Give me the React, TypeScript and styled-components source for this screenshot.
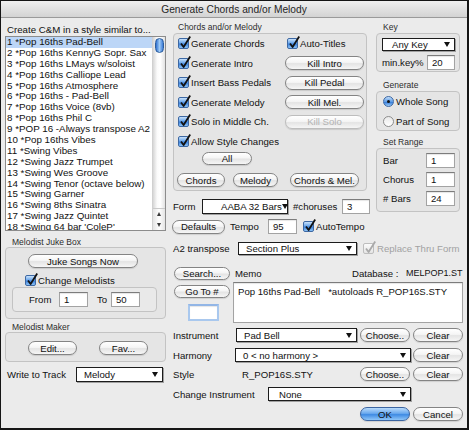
import React from "react";
import styled, { createGlobalStyle } from "styled-components";

const FONT = `"Liberation Sans", Arial, Helvetica, sans-serif`;

const GlobalStyle = createGlobalStyle`
  * { box-sizing: border-box; }
  html, body { margin: 0; padding: 0; background: #ffffff; }
  body { font-family: ${FONT}; color: #111; }
`;

const Window = styled.div`
  width: 469px;
  height: 430px;
  border: 1px solid #151515;
  border-right-width: 2px;
  border-bottom-width: 2px;
  background: #ebebeb;
  display: flex;
  flex-direction: column;
  overflow: hidden;
  font-family: ${FONT};
  font-size: 9.6px;
  color: #111;
`;

const TitleBar = styled.div`
  flex: none;
  height: 17px;
  background: linear-gradient(#f0f0f0, #d3d3d3);
  border-bottom: 1px solid #9a9a9a;
  display: flex;
  align-items: center;
  justify-content: center;
  font-size: 10.2px;
  color: #262626;
`;

const Body = styled.div`
  display: flex;
  align-items: flex-start;
  padding-left: 4px;
  gap: 7px;
`;

const LeftCol = styled.div`
  width: 161px;
  flex: none;
  display: flex;
  flex-direction: column;
`;

const Caption = styled.div`
  margin-top: 5px;
  height: 13px;
  line-height: 13px;
  padding-left: 2px;
  font-size: 9.7px;
  white-space: nowrap;
`;

const ListBox = styled.div`
  height: 195px;
  border: 1px solid #8c8c8c;
  background: #fff;
  display: flex;
`;

const ListItems = styled.div`
  flex: 1;
  overflow: hidden;
`;

const ListRow = styled.div<{ $selected?: boolean }>`
  height: 10.9px;
  line-height: 10.9px;
  font-size: 9.8px;
  padding-left: 1px;
  white-space: nowrap;
  background: ${(p) => (p.$selected ? "#bcd6f7" : "transparent")};
`;

const ScrollBar = styled.div`
  width: 13px;
  flex: none;
  display: flex;
  flex-direction: column;
  justify-content: space-between;
  align-items: center;
  background: linear-gradient(90deg, #d6d6d6, #fbfbfb 35%, #ffffff 60%, #e2e2e2);
  border-left: 1px solid #d0d0d0;
`;

const Thumb = styled.div`
  margin-top: 1px;
  width: 9px;
  height: 15px;
  border-radius: 5px;
  border: 1px solid #2d5e9e;
  background: linear-gradient(90deg, #2e6fcf, #9fcbf6 50%, #3a7ad6);
`;

const ScrollArrows = styled.div`
  width: 100%;
  height: 22px;
  display: flex;
  flex-direction: column;
  align-items: center;
  justify-content: space-around;
  border-top: 1px solid #c9c9c9;
  background: linear-gradient(90deg, #e4e4e4, #ffffff 50%, #e4e4e4);
`;

const ArrowUp = styled.span`
  width: 0;
  height: 0;
  border-left: 2.5px solid transparent;
  border-right: 2.5px solid transparent;
  border-bottom: 4px solid #3a3a3a;
`;

const ArrowDown = styled.span`
  width: 0;
  height: 0;
  border-left: 2.5px solid transparent;
  border-right: 2.5px solid transparent;
  border-top: 4px solid #3a3a3a;
`;

const GroupLabel = styled.div<{ $h: number; $pl: number; $mt?: number }>`
  margin-top: ${(p) => p.$mt ?? 4}px;
  height: ${(p) => p.$h}px;
  line-height: ${(p) => p.$h}px;
  padding-left: ${(p) => p.$pl}px;
  font-size: 8.5px;
  color: #2b2b2b;
  white-space: nowrap;
`;

const GroupBox = styled.div`
  border: 1px solid #c3c3c3;
  border-radius: 4px;
  background: #e5e5e5;
`;

const JukeBox = styled(GroupBox)`
  height: 72px;
  padding: 6px 5px;
  display: flex;
  flex-direction: column;
`;

const RangeBox = styled(GroupBox)`
  margin: 0 0 0 1px;
  width: 145px;
  height: 25px;
  padding-left: 16px;
  display: flex;
  align-items: center;
  background: #e9e9e9;
`;

const MakerBox = styled(GroupBox)`
  height: 30px;
  display: flex;
  align-items: center;
  padding: 2px 0 0 22px;
  gap: 22px;
`;

const WriteRow = styled.div`
  margin-top: 4px;
  height: 16px;
  display: flex;
  align-items: center;
  justify-content: space-between;
  padding: 0 3px 0 2px;
`;

const Label = styled.span<{ $w?: number; $ml?: number; $color?: string; $size?: number }>`
  flex: none;
  width: ${(p) => (p.$w ? `${p.$w}px` : "auto")};
  margin-left: ${(p) => p.$ml ?? 0}px;
  color: ${(p) => p.$color ?? "#111"};
  white-space: nowrap;
  font-size: ${(p) => p.$size ?? 9.6}px;
`;

const Btn = styled.div<{ $w: number; $h?: number; $ml?: number; $disabled?: boolean; $primary?: boolean }>`
  flex: none;
  width: ${(p) => p.$w}px;
  height: ${(p) => p.$h ?? 14}px;
  margin-left: ${(p) => p.$ml ?? 0}px;
  border-radius: 8px;
  border: 1px solid ${(p) => (p.$primary ? "#3b64a0" : p.$disabled ? "#bdbdbd" : "#848484")};
  background: ${(p) =>
    p.$primary
      ? "linear-gradient(#b9dbfb 0%, #6aa9ee 45%, #3f8be4 55%, #8fc6f8 100%)"
      : "linear-gradient(#ffffff 0%, #f5f5f5 45%, #e4e4e4 55%, #f6f6f6 100%)"};
  box-shadow: 0 1px 1px rgba(0, 0, 0, 0.12);
  display: flex;
  align-items: center;
  justify-content: center;
  font-size: 9.6px;
  color: ${(p) => (p.$disabled ? "#b3b3b3" : "#111")};
  white-space: nowrap;
`;

const CheckRow = styled.div<{ $ml?: number; $mt?: number }>`
  display: flex;
  align-items: center;
  gap: 2px;
  height: 14px;
  margin-left: ${(p) => p.$ml ?? 0}px;
  margin-top: ${(p) => p.$mt ?? 0}px;
  white-space: nowrap;
  font-size: 9.6px;
`;

const CheckBoxBox = styled.span<{ $disabled?: boolean }>`
  position: relative;
  flex: none;
  display: inline-block;
  width: 11px;
  height: 11px;
  border-radius: 2px;
  border: 1px solid ${(p) => (p.$disabled ? "#bdbdbd" : "#3d68a3")};
  background: ${(p) =>
    p.$disabled
      ? "linear-gradient(#fbfbfb, #e4e4e4)"
      : "linear-gradient(#c9e2fc 0%, #6aa6ea 45%, #3a80dc 55%, #8cc3f6 100%)"};
`;

const CheckMark = styled.svg`
  position: absolute;
  left: -1px;
  top: -4px;
  width: 14px;
  height: 14px;
  overflow: visible;
`;

const Check: React.FC<{ disabled?: boolean }> = ({ disabled }) => (
  <CheckBoxBox $disabled={disabled}>
    <CheckMark viewBox="0 0 14 14">
      <path
        d="M3 8.5 L5.6 12 L12.2 1.5"
        fill="none"
        stroke={disabled ? "#a9a9a9" : "#121212"}
        strokeWidth="1.8"
        strokeLinejoin="round"
      />
    </CheckMark>
  </CheckBoxBox>
);

const RadioDot = styled.span<{ $on?: boolean }>`
  position: relative;
  flex: none;
  width: 11px;
  height: 11px;
  border-radius: 50%;
  border: 1px solid ${(p) => (p.$on ? "#3d68a3" : "#8d8d8d")};
  background: ${(p) =>
    p.$on
      ? "linear-gradient(#c4defa 0%, #5f9de6 50%, #3a80dc 60%, #9ccbf7 100%)"
      : "linear-gradient(#e9e9e9, #ffffff)"};
  &::after {
    content: "";
    display: ${(p) => (p.$on ? "block" : "none")};
    position: absolute;
    left: 3px;
    top: 3px;
    width: 3px;
    height: 3px;
    border-radius: 50%;
    background: #111;
  }
`;

const Popup = styled.div<{ $w: number; $h?: number; $ml?: number; $pl?: number }>`
  flex: none;
  width: ${(p) => p.$w}px;
  height: ${(p) => p.$h ?? 14}px;
  margin-left: ${(p) => p.$ml ?? 0}px;
  background: #fff;
  border: 1px solid #1c1c1c;
  box-shadow: 1px 1px 0 #a0a0a0;
  display: flex;
  align-items: center;
  justify-content: space-between;
  padding: 0 4px 0 ${(p) => p.$pl ?? 7}px;
  font-size: 9.6px;
  white-space: nowrap;
`;

const Arrow = styled.span`
  flex: none;
  width: 0;
  height: 0;
  border-left: 3.5px solid transparent;
  border-right: 3.5px solid transparent;
  border-top: 5px solid #111;
`;

const Field = styled.div<{ $w: number; $h?: number; $ml?: number; $focus?: boolean }>`
  flex: none;
  width: ${(p) => p.$w}px;
  height: ${(p) => p.$h ?? 15}px;
  margin-left: ${(p) => p.$ml ?? 0}px;
  background: #fff;
  border: ${(p) => (p.$focus ? "2px solid #a9c8ee" : "1px solid #a3a3a3")};
  border-top-color: ${(p) => (p.$focus ? "#93b6e6" : "#7c7c7c")};
  box-shadow: inset 0 1px 1px rgba(0, 0, 0, 0.1);
  display: flex;
  align-items: center;
  padding-left: 4px;
  font-size: 9.6px;
`;

const RightArea = styled.div`
  width: 290px;
  flex: none;
  display: flex;
  flex-direction: column;
`;

const TopSection = styled.div`
  display: flex;
  align-items: flex-start;
  gap: 8px;
`;

const MidCol = styled.div`
  width: 195px;
  flex: none;
  display: flex;
  flex-direction: column;
`;

const ChordsBox = styled(GroupBox)`
  width: 194px;
  height: 158px;
  padding: 0 3px 0 4px;
  display: flex;
  flex-direction: column;
`;

const CheckGrid = styled.div`
  display: grid;
  grid-template-columns: 107px 79px;
  grid-auto-rows: 19.5px;
  align-items: center;
`;

const ButtonRow = styled.div<{ $mt: number }>`
  display: flex;
  align-items: center;
  margin-top: ${(p) => p.$mt}px;
`;

const FormRow = styled.div<{ $mt: number; $h?: number }>`
  display: flex;
  align-items: center;
  margin-top: ${(p) => p.$mt}px;
  height: ${(p) => p.$h ?? 15}px;
  white-space: nowrap;
`;

const RightCol = styled.div`
  width: 84px;
  flex: none;
  display: flex;
  flex-direction: column;
`;

const KeyBox = styled(GroupBox)`
  height: 39px;
  padding: 4px 4px 0 5px;
  display: flex;
  flex-direction: column;
  gap: 4px;
`;

const SplitRow = styled.div<{ $h: number }>`
  height: ${(p) => p.$h}px;
  display: flex;
  align-items: center;
  justify-content: space-between;
`;

const RadioBox = styled(GroupBox)`
  height: 40px;
  padding-left: 6px;
  display: grid;
  grid-auto-rows: 19.5px;
  align-items: center;
`;

const RadioRow = styled.div`
  display: flex;
  align-items: center;
  gap: 2px;
  font-size: 9.6px;
  white-space: nowrap;
`;

const SetRangeBox = styled(GroupBox)`
  height: 64px;
  padding: 2px 4px 0 6px;
  display: grid;
  grid-auto-rows: 19px;
  align-items: center;
`;

const MemoBlock = styled.div`
  margin-top: 2px;
  height: 41px;
  display: flex;
`;

const GoToCol = styled.div`
  width: 60px;
  flex: none;
  padding-top: 3px;
  display: flex;
  flex-direction: column;
  align-items: flex-start;
  gap: 6px;
`;

const MemoField = styled.div`
  width: 230px;
  height: 41px;
  background: #fff;
  border: 1px solid #a3a3a3;
  border-top-color: #7c7c7c;
  box-shadow: inset 0 1px 1px rgba(0, 0, 0, 0.1);
  padding: 3px 4px;
  font-size: 9.6px;
  white-space: pre;
`;

const items = [
  "1 *Pop 16ths Pad-Bell",
  "2 *Pop 16ths KennyG Sopr. Sax",
  "3 *Pop 16ths LMays w/soloist",
  "4 *Pop 16ths Calliope Lead",
  "5 *Pop 16ths Atmosphere",
  "6 *Pop 16ths - Pad-Bell",
  "7 *Pop 16ths Voice (8vb)",
  "8 *Pop 16ths Phil C",
  "9 *POP 16 -Always transpose A2",
  "10 *Pop 16ths Vibes",
  "11 *Swing Vibes",
  "12 *Swing Jazz Trumpet",
  "13 *Swing Wes Groove",
  "14 *Swing Tenor (octave below)",
  "15 *Swing Garner",
  "16 *Swing 8ths Sinatra",
  "17 *Swing Jazz Quintet",
  "18 *Swing 64 bar 'ColeP'",
];

export default function App() {
  return (
    <>
      <GlobalStyle />
      <Window>
        <TitleBar>Generate Chords and/or Melody</TitleBar>
        <Body>
          <LeftCol>
            <Caption>Create C&amp;M in a style similar to...</Caption>
            <ListBox>
              <ListItems>
                {items.map((t, i) => (
                  <ListRow key={i} $selected={i === 0}>
                    {t}
                  </ListRow>
                ))}
              </ListItems>
              <ScrollBar>
                <Thumb />
                <ScrollArrows>
                  <ArrowUp />
                  <ArrowDown />
                </ScrollArrows>
              </ScrollBar>
            </ListBox>

            <GroupLabel $h={9} $pl={7} $mt={7}>
              Melodist Juke Box
            </GroupLabel>
            <JukeBox>
              <Btn $w={110} $ml={17}>Juke Songs Now</Btn>
              <CheckRow $ml={14} $mt={5}>
                <Check />
                <span>Change Melodists</span>
              </CheckRow>
              <RangeBox>
                <Label $w={30}>From</Label>
                <Field $w={29}>1</Field>
                <Label $w={14} $ml={9}>To</Label>
                <Field $w={29}>50</Field>
              </RangeBox>
            </JukeBox>

            <GroupLabel $h={9} $pl={7}>Melodist Maker</GroupLabel>
            <MakerBox>
              <Btn $w={49}>Edit...</Btn>
              <Btn $w={49}>Fav...</Btn>
            </MakerBox>

            <WriteRow>
              <Label>Write to Track</Label>
              <Popup $w={87} $h={15}>
                Melody
                <Arrow />
              </Popup>
            </WriteRow>
          </LeftCol>

          <RightArea>
            <TopSection>
              <MidCol>
                <GroupLabel $h={11} $pl={5}>Chords and/or Melody</GroupLabel>
                <ChordsBox>
                  <CheckGrid>
                    <CheckRow>
                      <Check />
                      <span>Generate Chords</span>
                    </CheckRow>
                    <CheckRow $ml={2}>
                      <Check />
                      <span>Auto-Titles</span>
                    </CheckRow>
                    <CheckRow>
                      <Check />
                      <span>Generate Intro</span>
                    </CheckRow>
                    <Btn $w={79}>Kill Intro</Btn>
                    <CheckRow>
                      <Check />
                      <span>Insert Bass Pedals</span>
                    </CheckRow>
                    <Btn $w={79}>Kill Pedal</Btn>
                    <CheckRow>
                      <Check />
                      <span>Generate Melody</span>
                    </CheckRow>
                    <Btn $w={79}>Kill Mel.</Btn>
                    <CheckRow>
                      <Check />
                      <span>Solo in Middle Ch.</span>
                    </CheckRow>
                    <Btn $w={79} $disabled>
                      Kill Solo
                    </Btn>
                    <CheckRow>
                      <Check />
                      <span>Allow Style Changes</span>
                    </CheckRow>
                  </CheckGrid>
                  <ButtonRow $mt={1}>
                    <Btn $w={50} $h={13} $ml={24}>
                      All
                    </Btn>
                  </ButtonRow>
                  <ButtonRow $mt={8}>
                    <Btn $w={48} $ml={-1}>
                      Chords
                    </Btn>
                    <Btn $w={45} $ml={8}>
                      Melody
                    </Btn>
                    <Btn $w={69} $ml={12}>
                      Chords &amp; Mel.
                    </Btn>
                  </ButtonRow>
                </ChordsBox>

                <FormRow $mt={8}>
                  <Label $w={29}>Form</Label>
                  <Popup $w={86} $h={15} $pl={18}>
                    AABA 32 Bars
                    <Arrow />
                  </Popup>
                  <Label $w={49} $ml={5}>
                    #choruses
                  </Label>
                  <Field $w={28}>3</Field>
                </FormRow>

                <FormRow $mt={5}>
                  <Btn $w={53} $ml={-1}>
                    Defaults
                  </Btn>
                  <Label $w={38} $ml={5}>
                    Tempo
                  </Label>
                  <Field $w={29}>95</Field>
                  <CheckRow $ml={6}>
                    <Check />
                    <span>AutoTempo</span>
                  </CheckRow>
                </FormRow>
              </MidCol>

              <RightCol>
                <GroupLabel $h={11} $pl={7}>Key</GroupLabel>
                <KeyBox>
                  <Popup $w={73} $h={13} $pl={9}>
                    Any Key
                    <Arrow />
                  </Popup>
                  <SplitRow $h={15}>
                    <Label>min.key%</Label>
                    <Field $w={28}>20</Field>
                  </SplitRow>
                </KeyBox>

                <GroupLabel $h={11} $pl={7} $mt={8}>
                  Generate
                </GroupLabel>
                <RadioBox>
                  <RadioRow>
                    <RadioDot $on />
                    <span>Whole Song</span>
                  </RadioRow>
                  <RadioRow>
                    <RadioDot />
                    <span>Part of Song</span>
                  </RadioRow>
                </RadioBox>

                <GroupLabel $h={11} $pl={7} $mt={6}>
                  Set Range
                </GroupLabel>
                <SetRangeBox>
                  <SplitRow $h={15}>
                    <Label>Bar</Label>
                    <Field $w={29}>1</Field>
                  </SplitRow>
                  <SplitRow $h={15}>
                    <Label>Chorus</Label>
                    <Field $w={29}>1</Field>
                  </SplitRow>
                  <SplitRow $h={15}>
                    <Label># Bars</Label>
                    <Field $w={29}>24</Field>
                  </SplitRow>
                </SetRangeBox>
              </RightCol>
            </TopSection>

            <FormRow $mt={7}>
              <Label $w={65}>A2 transpose</Label>
              <Popup $w={119} $h={13}>
                Section Plus
                <Arrow />
              </Popup>
              <CheckRow $ml={6}>
                <Check disabled />
                <Label $ml={1} $color="#a2a2a2">
                  Replace Thru Form
                </Label>
              </CheckRow>
            </FormRow>

            <FormRow $mt={10} $h={14}>
              <Btn $w={56} $h={13} $ml={1}>
                Search...
              </Btn>
              <Label $w={117} $ml={5}>
                Memo
              </Label>
              <Label $w={54}>Database :</Label>
              <Label $size={9}>MELPOP1.ST</Label>
            </FormRow>

            <MemoBlock>
              <GoToCol>
                <Btn $w={56} $h={13} $ml={1}>
                  Go To #
                </Btn>
                <Field $w={31} $h={17} $ml={15} $focus />
              </GoToCol>
              <MemoField>Pop 16ths Pad-Bell   *autoloads R_POP16S.STY</MemoField>
            </MemoBlock>

            <FormRow $mt={5} $h={14}>
              <Label $w={63}>Instrument</Label>
              <Popup $w={121}>
                Pad Bell
                <Arrow />
              </Popup>
              <Btn $w={50} $ml={3}>
                Choose..
              </Btn>
              <Btn $w={50} $ml={3}>
                Clear
              </Btn>
            </FormRow>

            <FormRow $mt={6} $h={14}>
              <Label $w={62}>Harmony</Label>
              <Popup $w={176}>
                0 &lt; no harmony &gt;
                <Arrow />
              </Popup>
              <Btn $w={50} $ml={2}>
                Clear
              </Btn>
            </FormRow>

            <FormRow $mt={5} $h={14}>
              <Label $w={69}>Style</Label>
              <Label $w={118}>R_POP16S.STY</Label>
              <Btn $w={50}>Choose..</Btn>
              <Btn $w={50} $ml={3}>
                Clear
              </Btn>
            </FormRow>

            <FormRow $mt={6} $h={14}>
              <Label $w={95}>Change Instrument</Label>
              <Popup $w={143} $pl={10}>
                None
                <Arrow />
              </Popup>
            </FormRow>

            <FormRow $mt={6} $h={14}>
              <Btn $w={50} $ml={187} $primary>
                OK
              </Btn>
              <Btn $w={50} $ml={3}>
                Cancel
              </Btn>
            </FormRow>
          </RightArea>
        </Body>
      </Window>
    </>
  );
}
